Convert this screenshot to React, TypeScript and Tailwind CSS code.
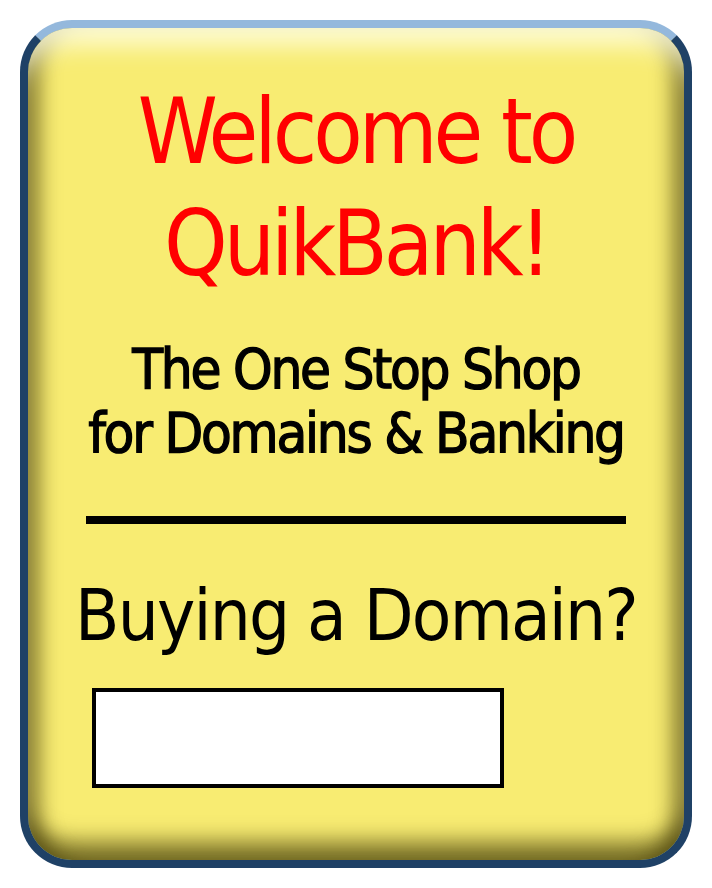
const cardFont = { fontFamily: '"DejaVu Sans Condensed", "DejaVu Sans", sans-serif' };

const App = () => {
    return <div className="min-h-screen bg-white p-[20px]">
        <div
            className="w-[672px] h-[848px] rounded-[52px] border-8 border-[#1f4166] border-t-[#94b8dc] bg-[#f8ec72] overflow-hidden shadow-[inset_0_34px_24px_-16px_rgba(255,255,235,0.8),inset_24px_0_20px_-12px_rgba(70,62,10,0.6),inset_-24px_0_20px_-12px_rgba(70,62,10,0.6),inset_0_-30px_22px_-12px_rgba(70,62,10,0.7)]"
            style={cardFont}
        >
            <div className="flex flex-col pt-[48px]">
                <h1 className="text-center text-[90px] leading-[112px] tracking-[-0.045em] text-[#ff0000]">
                    Welcome to<br />QuikBank!
                </h1>

                <p className="mt-[37px] text-center text-[56px] leading-[64px] tracking-[-0.04em] text-black [-webkit-text-stroke:1.3px_black]">
                    The One Stop Shop<br />for Domains &amp; Banking
                </p>

                <div className="mx-auto mt-[51px] h-[8px] w-[540px] bg-black" />

                <h2 className="mt-[55px] text-center text-[72px] leading-[72px] tracking-[-0.025em] text-black">
                    Buying a Domain?
                </h2>

                <input
                    type="text"
                    className="ml-[64px] mt-[37px] h-[100px] w-[412px] border-4 border-black bg-white outline-none"
                />
            </div>
        </div>
    </div>
}

export default App;
